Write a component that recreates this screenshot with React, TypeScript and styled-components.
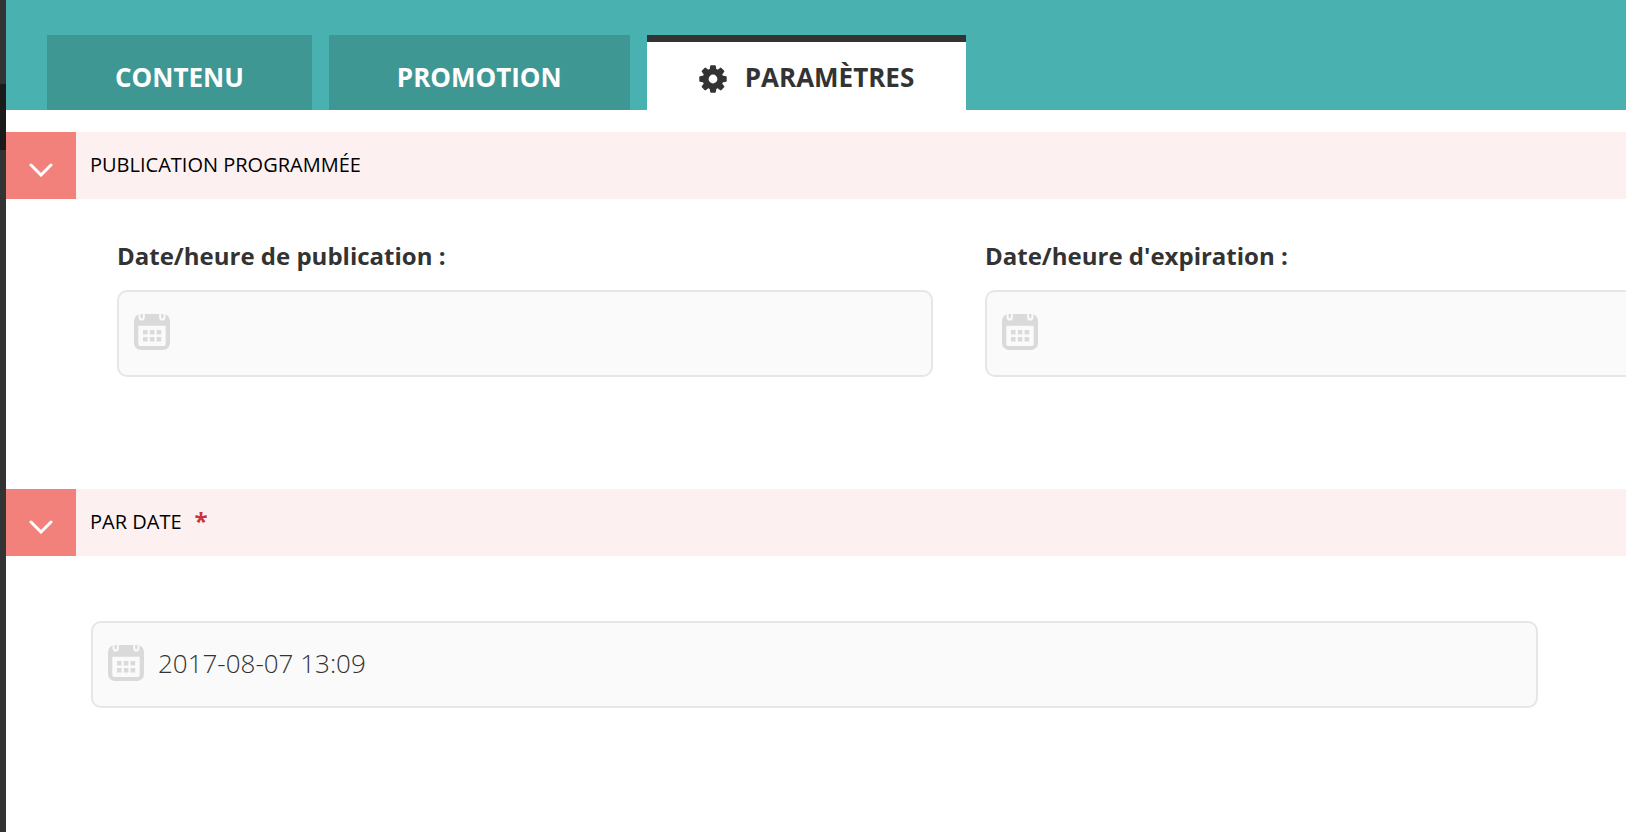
import React, { useState } from 'react';
import styled, { createGlobalStyle } from 'styled-components';

const GlobalStyle = createGlobalStyle`
  *, *::before, *::after { box-sizing: border-box; }
  body {
    margin: 0;
    background: #fff;
    color: #333;
    font-family: 'Open Sans', 'Noto Sans', sans-serif;
  }
`;

const Page = styled.div`
  display: flex;
  min-height: 100vh;
  overflow: hidden;
`;

const Rail = styled.aside`
  flex: none;
  width: 6px;
  padding-top: 84px;
  background: #333;
`;

const RailMarker = styled.div`
  height: 66px;
  background: #1a1a1a;
`;

const Content = styled.main`
  flex: 1;
  min-width: 0;
`;

const TabBar = styled.nav`
  display: flex;
  align-items: flex-end;
  gap: 17px;
  height: 110px;
  padding-left: 41px;
  background: #4ab1b1;
`;

const Tab = styled.button<{ $active?: boolean }>`
  display: flex;
  align-items: center;
  justify-content: center;
  gap: 18px;
  height: 75px;
  padding: ${p => (p.$active ? '2px 52px 0' : '9px 68px 0')};
  border: 0;
  border-top: ${p => (p.$active ? '7px solid #333' : '0')};
  background: ${p => (p.$active ? '#fff' : '#3f9794')};
  color: ${p => (p.$active ? '#333' : '#fff')};
  font-family: inherit;
  font-size: 26px;
  font-weight: 700;
  line-height: 36px;
  text-transform: uppercase;
  white-space: nowrap;
  cursor: pointer;

  svg {
    flex: none;
    margin-top: 3px;
  }
`;

const Panel = styled.div`
  padding-top: 22px;
`;

const SectionHeader = styled.header`
  display: flex;
  align-items: stretch;
  height: 67px;
  background: #fcf1f0;
`;

const Toggle = styled.button`
  display: flex;
  align-items: center;
  justify-content: center;
  width: 70px;
  padding: 8px 0 0;
  border: 0;
  background: #f2807b;
  cursor: pointer;
`;

const SectionTitle = styled.h2`
  display: flex;
  align-items: center;
  gap: 13px;
  margin: 0;
  padding: 0 0 2px 14px;
  color: #000;
  font-size: 20px;
  font-weight: 400;
  line-height: 28px;
  text-transform: uppercase;
`;

const Required = styled.span`
  padding-bottom: 2px;
  color: #cb333b;
  font-size: 24px;
  font-weight: 700;
`;

const FieldPair = styled.div`
  display: grid;
  grid-template-columns: 1fr 1fr;
  gap: 52px;
  margin-right: -175px;
  padding: 40px 0 112px 111px;
`;

const SingleField = styled.div`
  padding: 65px 88px 65px 85px;
`;

const Label = styled.label`
  display: block;
  margin-bottom: 17px;
  font-size: 24px;
  font-weight: 700;
  line-height: 34px;
`;

const DateBox = styled.div`
  display: flex;
  align-items: center;
  gap: 14px;
  height: 87px;
  padding: 0 15px;
  border: 2px solid #e6e6e6;
  border-radius: 10px;
  background: #fafafa;

  svg {
    flex: none;
    margin-bottom: 3px;
  }
`;

const DateInput = styled.input`
  flex: 1;
  min-width: 0;
  height: 60px;
  padding: 0 0 3px;
  border: 0;
  outline: 0;
  background: transparent;
  color: #333;
  font-family: inherit;
  font-size: 26px;
  font-weight: 300;
`;

const CalendarIcon = () => (
  <svg width="36" height="36" viewBox="0 0 36 36" aria-hidden="true">
    <rect width="36" height="36" rx="7" fill="#dadada" />
    <path d="M4.6 0v3.4a3.1 3.1 0 0 0 6.2 0V0zM25.2 0v3.4a3.1 3.1 0 0 0 6.2 0V0z" fill="#fafafa" />
    <path d="M6.5 0v3.1a1.2 1.2 0 0 0 2.4 0V0zM27.1 0v3.1a1.2 1.2 0 0 0 2.4 0V0z" fill="#dadada" />
    <path d="M4.3 11.8h27.4v18.4a1.8 1.8 0 0 1-1.8 1.8H6.1a1.8 1.8 0 0 1-1.8-1.8z" fill="#fafafa" />
    <path
      d="M9 16h4.6v4.6H9zM15.8 16h4.6v4.6h-4.6zM22.6 16h4.6v4.6h-4.6zM9 23h4.6v4.6H9zM15.8 23h4.6v4.6h-4.6zM22.6 23h4.6v4.6h-4.6z"
      fill="#dadada"
    />
  </svg>
);

const GearIcon = () => (
  <svg width="28" height="28" viewBox="-14 -14 28 28" aria-hidden="true">
    <circle r="7.4" fill="none" stroke="#333" strokeWidth="6" />
    {[0, 45, 90, 135, 180, 225, 270, 315].map(angle => (
      <path
        key={angle}
        d="M-3.4-9l.6-4.1q.1-.6.7-.6h4.2q.6 0 .7.6L3.4-9z"
        fill="#333"
        transform={`rotate(${angle})`}
      />
    ))}
  </svg>
);

const ChevronIcon = () => (
  <svg width="24" height="14" viewBox="0 0 24 14" aria-hidden="true">
    <path d="M2 2l10 10L22 2" fill="none" stroke="#fff" strokeWidth="3" strokeLinecap="round" />
  </svg>
);

type DateFieldProps = { id: string; label?: string; ariaLabel?: string; initial?: string };

const DateField = ({ id, label, ariaLabel, initial = '' }: DateFieldProps) => {
  const [value, setValue] = useState(initial);
  return (
    <div>
      {label && <Label htmlFor={id}>{label}</Label>}
      <DateBox>
        <CalendarIcon />
        <DateInput
          id={id}
          type="text"
          aria-label={ariaLabel}
          value={value}
          onChange={e => setValue(e.target.value)}
        />
      </DateBox>
    </div>
  );
};

type SectionProps = { title: string; required?: boolean; children: React.ReactNode };

const Section = ({ title, required, children }: SectionProps) => {
  const [open, setOpen] = useState(true);
  return (
    <section>
      <SectionHeader>
        <Toggle type="button" aria-label={title} aria-expanded={open} onClick={() => setOpen(!open)}>
          <ChevronIcon />
        </Toggle>
        <SectionTitle>
          {title}
          {required && <Required>*</Required>}
        </SectionTitle>
      </SectionHeader>
      {open && children}
    </section>
  );
};

export default function App() {
  return (
    <>
      <GlobalStyle />
      <Page>
        <Rail>
          <RailMarker />
        </Rail>
        <Content>
          <TabBar>
            <Tab type="button">Contenu</Tab>
            <Tab type="button">Promotion</Tab>
            <Tab type="button" $active>
              <GearIcon />
              Paramètres
            </Tab>
          </TabBar>
          <Panel>
            <Section title="Publication programmée">
              <FieldPair>
                <DateField id="publish-at" label="Date/heure de publication :" />
                <DateField id="expire-at" label="Date/heure d'expiration :" />
              </FieldPair>
            </Section>
            <Section title="Par date" required>
              <SingleField>
                <DateField id="by-date" ariaLabel="Par date" initial="2017-08-07 13:09" />
              </SingleField>
            </Section>
          </Panel>
        </Content>
      </Page>
    </>
  );
}
